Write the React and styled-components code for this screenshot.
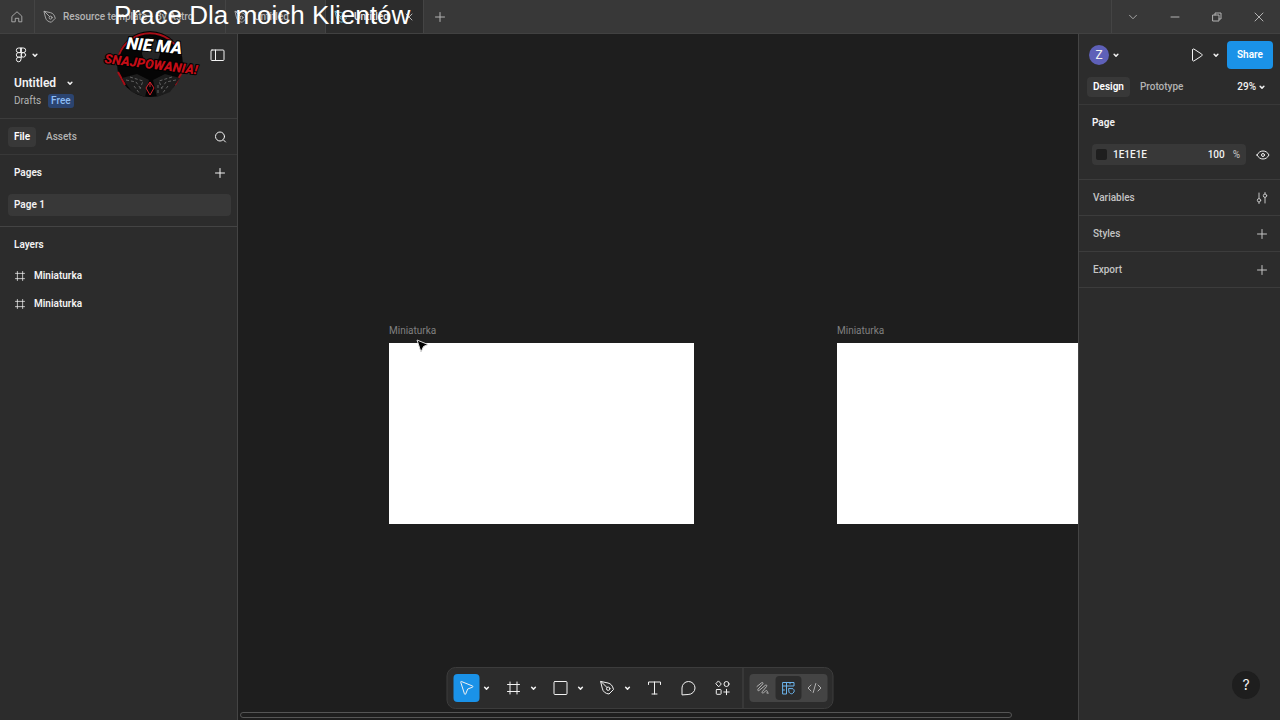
import React from "react";
import styled, { createGlobalStyle, css } from "styled-components";

const GlobalStyle = createGlobalStyle`
  * {
    box-sizing: border-box;
  }

  body {
    margin: 0;
    background: #1e1e1e;
    color: #f2f2f2;
    font-family: Roboto, "Liberation Sans", sans-serif;
    font-size: 10px;
    line-height: 16px;
    overflow: hidden;
  }

  button,
  input,
  select {
    font: inherit;
    color: inherit;
    background: none;
    border: 0;
    padding: 0;
    margin: 0;
  }

  h2,
  p,
  ul {
    margin: 0;
    padding: 0;
    font: inherit;
    list-style: none;
  }
`;

const paths = {
  home: <path d="M2.5 7 8 2l5.5 5v6.5H10v-4H6v4H2.5z" />,
  pen: (
    <>
      <path d="M1.5 1.5 8.5 3c3 .8 4.500 2.500 5.500 6.500L9.500 14C6 13.500 3.500 12 2.800 8.500z" />
      <path d="m1.500 1.500 6 6" />
      <circle cx="8.700" cy="8.700" r="1.700" />
    </>
  ),
  figma: (
    <>
      <path d="M8 1H5.600a2.300 2.300 0 0 0 0 4.600H8zM8 1h2.400a2.300 2.300 0 0 1 0 4.600H8zM8 5.600H5.600a2.300 2.300 0 0 0 0 4.600H8zM8 10.200H5.600A2.300 2.300 0 1 0 8 12.500z" />
      <circle cx="10.300" cy="7.900" r="2.300" />
    </>
  ),
  chevron: <path d="m5.500 7 2.500 2.500L10.500 7" />,
  wideChevron: <path d="m4 6 4 4 4-4" />,
  plus: <path d="M8 3.500v9M3.500 8h9" />,
  minus: <path d="M4 8h8" />,
  close: <path d="m4 4 8 8M12 4l-8 8" />,
  restore: (
    <>
      <rect x="4" y="6" width="6" height="6" />
      <path d="M6 6V4h6v6h-2" />
    </>
  ),
  panel: (
    <>
      <rect x="2" y="3" width="13" height="10.500" rx="1" />
      <path d="M6.500 3v10.500" />
    </>
  ),
  search: (
    <>
      <circle cx="8" cy="7.500" r="4.500" />
      <path d="m11.500 11 2 2" />
    </>
  ),
  frame: <path d="M4.500 2v12M11.500 2v12M2 4.500h12M2 11.500h12" />,
  square: <rect x="1.500" y="1.500" width="13" height="13" rx="1" />,
  cursor: (
    <path d="M2.200 2.200c-.2-.5.2-.9.700-.7L14 6c.6.300.6 1 0 1.200L9.200 9 7.200 14c-.3.600-1 .6-1.200 0z" />
  ),
  text: <path d="M2 4.500V2h12v2.500M8 2v12M5.500 14h5" />,
  comment: <path d="M1.500 14.500V8A6.500 6.500 0 1 1 8 14.500z" />,
  components: (
    <>
      <path d="m4.200 1.200 2.600 2.800-2.600 2.800L1.600 4z" />
      <circle cx="12" cy="4" r="2.500" />
      <rect x="1.800" y="9.500" width="4.800" height="4.800" rx="0.700" />
      <path d="M12 9.300v5.400M9.300 12h5.400" />
    </>
  ),
  draw: (
    <path d="M2.500 6.500 7 2.800c1.200-.8 2 .2 1.200 1.200L3.500 9.200c-.8 1.200.2 2 1.300 1.100l6-5c1.200-.8 2 .2 1.200 1.300l-4.200 5c-.8 1.200.2 2 1.300 1.100l2-1.700c1.200-.9 2.200 0 1.600 1.200l-.4.900h1.500" />
  ),
  design: (
    <>
      <path d="M2.500 2.500h11v3.500H6v8H2.500zM6 2.500V6H2.500M9.500 2.500V4M2.500 10H4" />
      <path d="m8.500 8.500 4 .2c1 .8 1.500 1.800 1 3.300l-1.700 1.700c-1.300.3-2.300-.2-3.100-1.200z" />
    </>
  ),
  code: <path d="m4.500 5-3 3 3 3M11.500 5l3 3-3 3M9.300 3.500l-2.600 9" />,
  play: (
    <path d="M3.500 3v10c0 .9.800 1.300 1.500.9l7.700-5c.6-.4.600-1.400 0-1.800L5 2.100C4.300 1.700 3.500 2.100 3.500 3z" />
  ),
  eye: (
    <>
      <path d="M2 8c1.500-2.700 3.500-4 6-4s4.500 1.300 6 4c-1.500 2.700-3.500 4-6 4s-4.500-1.300-6-4z" />
      <circle cx="8" cy="8" r="1.500" />
    </>
  ),
  variables: (
    <>
      <path d="M5 3v5.500M5 12v1.500M11 7.500V13M11 2.500V4" />
      <circle cx="5" cy="10.300" r="1.700" />
      <circle cx="11" cy="5.700" r="1.700" />
    </>
  ),
};

function Icon({ name, size = 16, weight = 1 }) {
  return (
    <Svg
      width={size}
      height={size}
      viewBox="0 0 16 16"
      strokeWidth={weight}
      aria-hidden="true"
    >
      {paths[name]}
    </Svg>
  );
}

const tools = [
  { name: "cursor", label: "Move", menu: true, active: true },
  { name: "frame", label: "Frame", menu: true },
  { name: "square", label: "Rectangle", menu: true },
  { name: "pen", label: "Pen", menu: true },
  { name: "text", label: "Text" },
  { name: "comment", label: "Comment" },
  { name: "components", label: "Actions" },
];

function TitleBar() {
  return (
    <Bar>
      <HomeButton aria-label="Home">
        <Icon name="home" size={14} />
      </HomeButton>
      <Tab $width={191}>
        <Icon name="pen" size={14} />
        Resource template - By Astro
      </Tab>
      <Tab $width={100}>
        <Icon name="pen" size={14} />
        Untitled
      </Tab>
      <Tab $width={98} $active>
        <TabIcon>
          <Icon name="pen" size={14} />
        </TabIcon>
        <TabName>Untitled</TabName>
        <Icon name="close" size={12} />
      </Tab>
      <NewTab aria-label="New tab">
        <Icon name="plus" />
      </NewTab>
      <WindowControls>
        <WindowButton aria-label="Tab list">
          <Icon name="wideChevron" size={14} />
        </WindowButton>
        <WindowButton aria-label="Minimize">
          <Icon name="minus" />
        </WindowButton>
        <WindowButton aria-label="Restore">
          <Icon name="restore" />
        </WindowButton>
        <WindowButton aria-label="Close">
          <Icon name="close" />
        </WindowButton>
      </WindowControls>
    </Bar>
  );
}

function LeftPanel() {
  return (
    <Sidebar>
      <FileHeader>
        <Row>
          <MenuButton aria-label="Main menu">
            <Icon name="figma" />
            <Icon name="chevron" size={12} weight={2} />
          </MenuButton>
          <IconButton aria-label="Toggle sidebar">
            <Icon name="panel" />
          </IconButton>
        </Row>
        <FileName>
          Untitled
          <Icon name="chevron" size={12} weight={2} />
        </FileName>
        <Location>
          Drafts
          <Plan>Free</Plan>
        </Location>
      </FileHeader>
      <TabRow>
        <PanelTab $active>File</PanelTab>
        <PanelTab>Assets</PanelTab>
        <Spacer />
        <IconButton aria-label="Search">
          <Icon name="search" />
        </IconButton>
      </TabRow>
      <Pages>
        <PagesHeader>
          <Heading>Pages</Heading>
          <IconButton aria-label="Add page">
            <Icon name="plus" />
          </IconButton>
        </PagesHeader>
        <PageItem>Page 1</PageItem>
      </Pages>
      <Layers>
        <Heading>Layers</Heading>
        <ul>
          <Layer>
            <Icon name="frame" size={12} weight={1} />
            Miniaturka
          </Layer>
          <Layer>
            <Icon name="frame" size={12} weight={1} />
            Miniaturka
          </Layer>
        </ul>
      </Layers>
    </Sidebar>
  );
}

function RightPanel() {
  return (
    <Inspector>
      <Account>
        <Avatar>Z</Avatar>
        <Icon name="chevron" size={12} weight={2} />
        <Spacer />
        <IconButton aria-label="Present">
          <Icon name="play" />
        </IconButton>
        <IconButton aria-label="Present options">
          <Icon name="chevron" size={12} weight={2} />
        </IconButton>
        <Share>Share</Share>
      </Account>
      <InspectorTabs>
        <PanelTab $active>Design</PanelTab>
        <PanelTab>Prototype</PanelTab>
        <Spacer />
        <Zoom>
          29%
          <Icon name="chevron" size={12} weight={2} />
        </Zoom>
      </InspectorTabs>
      <PageSection>
        <Heading>Page</Heading>
        <FillRow>
          <Fill>
            <Swatch />
            <HexInput aria-label="Page colour" defaultValue="1E1E1E" />
            <OpacityInput aria-label="Opacity" defaultValue="100" />
            <Unit>%</Unit>
          </Fill>
          <IconButton aria-label="Toggle visibility">
            <Icon name="eye" />
          </IconButton>
        </FillRow>
      </PageSection>
      <Section>
        Variables
        <IconButton aria-label="Open variables">
          <Icon name="variables" />
        </IconButton>
      </Section>
      <Section>
        Styles
        <IconButton aria-label="Add style">
          <Icon name="plus" />
        </IconButton>
      </Section>
      <Section>
        Export
        <IconButton aria-label="Add export">
          <Icon name="plus" />
        </IconButton>
      </Section>
    </Inspector>
  );
}

function Toolbar() {
  return (
    <Tools>
      <ToolList>
        {tools.map((tool) => (
          <ToolGroup key={tool.name}>
            <ToolButton aria-label={tool.label} $active={tool.active}>
              <Icon name={tool.name} />
            </ToolButton>
            {tool.menu && (
              <ToolMenu aria-label={`${tool.label} options`}>
                <Icon name="chevron" size={12} weight={2} />
              </ToolMenu>
            )}
          </ToolGroup>
        ))}
      </ToolList>
      <Modes>
        <ModeButton aria-label="Draw">
          <Icon name="draw" />
        </ModeButton>
        <ModeButton aria-label="Design" $active>
          <Icon name="design" />
        </ModeButton>
        <ModeButton aria-label="Dev mode">
          <Icon name="code" />
        </ModeButton>
      </Modes>
    </Tools>
  );
}

function Badge() {
  return (
    <BadgeSvg width="96" height="72" viewBox="0 0 96 72">
      <circle cx="48" cy="36" r="33" fill="#050505" />
      <path
        d="M17 27A33 33 0 0 1 79 27M16 44l7 13M80 44l-7 13"
        fill="none"
        stroke="#a80d16"
        strokeWidth="2"
      />
      <path d="M40 26c0-22 18-22 18 0l-4 12H44z" fill="#252525" />
      <path
        d="m20 50 15-4 12 6-4 17-13-5zM78 50l-15-4-12 6 4 17 13-5z"
        fill="#1c1c1c"
      />
      <path
        d="m24 52 10 2 5 7M28 49l13 4-3 8M32 58l6 8M74 52l-10 2-5 7M70 49l-13 4 3 8M66 58l-6 8M56 57v10"
        fill="none"
        stroke="#606060"
        strokeDasharray="3 2"
      />
      <path d="m48 54 4 6-4 7-4-7zM48 54v5" fill="none" stroke="#d5202b" />
      <Lettering x="24" y="21" $size={17} fill="#fff" transform="rotate(5 24 21)">
        NIE MA
      </Lettering>
      <Lettering x="2" y="35" $size={13} fill="#c40d17" transform="rotate(7 2 35)">
        SNAJPOWANIA!
      </Lettering>
    </BadgeSvg>
  );
}

function App() {
  return (
    <Window>
      <GlobalStyle />
      <TitleBar />
      <Workspace>
        <LeftPanel />
        <Canvas>
          <Artboard $x={151} $y={289}>
            <ArtboardName>Miniaturka</ArtboardName>
            <ArtboardBody />
          </Artboard>
          <Artboard $x={599} $y={289}>
            <ArtboardName>Miniaturka</ArtboardName>
            <ArtboardBody />
          </Artboard>
          <Pointer width="13" height="14" viewBox="0 0 13 14">
            <path d="M1 1 12 5.500 7.500 7.500 5 13z" />
          </Pointer>
          <Scrollbar />
        </Canvas>
        <RightPanel />
      </Workspace>
      <Toolbar />
      <Help aria-label="Help">?</Help>
      <Caption>Prace Dla moich Klientów</Caption>
      <Badge />
    </Window>
  );
}

export default App;

const Svg = styled.svg`
  flex: none;
  display: block;
  fill: none;
  stroke: currentColor;
  stroke-linecap: round;
  stroke-linejoin: round;
`;

const Window = styled.div`
  position: relative;
  display: flex;
  flex-direction: column;
  height: 100vh;
`;

const Bar = styled.header`
  display: flex;
  height: 34px;
  background: #383838;
  border-bottom: 1px solid #414141;
  color: #b3b3b3;
`;

const HomeButton = styled.button`
  display: grid;
  place-items: center;
  width: 35px;
  border-right: 1px solid #444;
`;

const Tab = styled.button`
  display: flex;
  align-items: center;
  gap: 6px;
  width: ${(props) => props.$width}px;
  padding: 0 8px;
  border-right: 1px solid #444;
  font-weight: 500;
  white-space: nowrap;

  ${(props) =>
    props.$active &&
    css`
      background: #2c2c2c;
      color: #e6e6e6;
    `}
`;

const TabIcon = styled.span`
  color: #6fc3d8;
`;

const TabName = styled.span`
  flex: 1;
  text-align: left;
`;

const NewTab = styled.button`
  display: grid;
  place-items: center;
  width: 32px;
`;

const WindowControls = styled.div`
  display: flex;
  margin-left: auto;
  border-left: 1px solid #444;
`;

const WindowButton = styled.button`
  display: grid;
  place-items: center;
  width: 42px;
`;

const Workspace = styled.div`
  flex: 1;
  display: grid;
  grid-template-columns: 238px minmax(0, 1fr) 202px;
`;

const Sidebar = styled.aside`
  background: #2c2c2c;
  border-right: 1px solid #444;
`;

const Row = styled.div`
  display: flex;
  align-items: center;
  justify-content: space-between;
`;

const Spacer = styled.div`
  flex: 1;
`;

const IconButton = styled.button`
  display: grid;
  place-items: center;
`;

const FileHeader = styled.div`
  height: 85px;
  padding: 13px 12px 0 13px;
  border-bottom: 1px solid #3c3c3c;
`;

const MenuButton = styled.button`
  display: flex;
  align-items: center;
`;

const FileName = styled.button`
  display: flex;
  align-items: center;
  gap: 8px;
  margin-top: 12px;
  padding-left: 1px;
  font-size: 12px;
  font-weight: 600;
`;

const Location = styled.p`
  display: flex;
  align-items: center;
  gap: 7px;
  margin-top: 2px;
  padding-left: 1px;
  color: #b3b3b3;
`;

const Plan = styled.span`
  padding: 0 3px;
  border-radius: 3px;
  background: #2b4470;
  color: #8cbcf5;
  line-height: 14px;
  font-weight: 500;
`;

const TabRow = styled.div`
  display: flex;
  align-items: center;
  gap: 4px;
  height: 36px;
  padding: 0 9px 0 8px;
  border-bottom: 1px solid #383838;
`;

const PanelTab = styled.button`
  height: 20px;
  padding: 0 6px;
  border-radius: 4px;
  color: #b3b3b3;
  font-weight: 500;

  ${(props) =>
    props.$active &&
    css`
      background: #383838;
      color: #fff;
      font-weight: 600;
    `}
`;

const Heading = styled.h2`
  font-weight: 600;
`;

const Pages = styled.section`
  height: 72px;
  padding: 10px 6px 0 8px;
  border-bottom: 1px solid #444;
`;

const PagesHeader = styled(Row)`
  padding: 0 3px 0 6px;
`;

const PageItem = styled.button`
  display: block;
  width: 100%;
  height: 22px;
  margin-top: 13px;
  padding: 0 6px;
  border-radius: 4px;
  background: #383838;
  font-weight: 600;
  text-align: left;
`;

const Layers = styled.section`
  padding: 10px 14px;

  ul {
    margin-top: 9px;
  }
`;

const Layer = styled.li`
  display: flex;
  align-items: center;
  gap: 8px;
  height: 28px;
  font-weight: 600;
`;

const Canvas = styled.main`
  position: relative;
  overflow: hidden;
  background: #1e1e1e;
`;

const Artboard = styled.div`
  position: absolute;
  left: ${(props) => props.$x}px;
  top: ${(props) => props.$y}px;
`;

const ArtboardName = styled.p`
  height: 20px;
  color: #808080;
`;

const ArtboardBody = styled.div`
  width: 305px;
  height: 181px;
  background: #fff;
`;

const Pointer = styled.svg`
  position: absolute;
  left: 178px;
  top: 305px;
  fill: #000;
  stroke: #ddd;
`;

const Scrollbar = styled.div`
  position: absolute;
  left: 2px;
  right: 66px;
  bottom: 2px;
  height: 6px;
  border: 1px solid #555;
  border-radius: 3px;
`;

const Inspector = styled.aside`
  background: #2c2c2c;
  border-left: 1px solid #444;
`;

const Account = styled.div`
  display: flex;
  align-items: center;
  padding: 7px 7px 0 10px;

  button {
    margin-left: 5px;
  }
`;

const Avatar = styled.span`
  display: grid;
  place-items: center;
  width: 20px;
  height: 20px;
  margin-right: 1px;
  border-radius: 50%;
  background: #5e60b8;
  font-size: 12px;
`;

const Share = styled.button`
  width: 46px;
  height: 28px;
  border-radius: 4px;
  background: #1a92e8;
  color: #fff;
  font-weight: 600;
`;

const InspectorTabs = styled.div`
  display: flex;
  align-items: center;
  gap: 4px;
  height: 36px;
  padding: 0 12px 0 8px;
  border-bottom: 1px solid #383838;
`;

const Zoom = styled.button`
  display: flex;
  align-items: center;
  font-weight: 500;
`;

const PageSection = styled.section`
  height: 75px;
  padding: 10px 9px 0 13px;
  border-bottom: 1px solid #3c3c3c;
`;

const FillRow = styled.div`
  display: flex;
  align-items: center;
  justify-content: space-between;
  margin-top: 13px;
`;

const Fill = styled.div`
  display: flex;
  align-items: center;
  width: 154px;
  height: 21px;
  padding: 0 6px 0 4px;
  border-radius: 4px;
  background: #383838;
  font-weight: 500;
`;

const Swatch = styled.span`
  width: 11px;
  height: 11px;
  border-radius: 2px;
  background: #1e1e1e;
`;

const HexInput = styled.input`
  flex: 1;
  min-width: 0;
  margin-left: 6px;
`;

const OpacityInput = styled.input`
  width: 25px;
`;

const Unit = styled.span`
  color: #b3b3b3;
`;

const Section = styled.section`
  display: flex;
  align-items: center;
  justify-content: space-between;
  height: 36px;
  padding: 0 10px 0 14px;
  border-bottom: 1px solid #3c3c3c;
  color: #c4c4c4;
  font-weight: 500;
`;

const Tools = styled.nav`
  position: absolute;
  left: 50%;
  bottom: 11px;
  display: flex;
  height: 42px;
  border: 1px solid #3c3c3c;
  border-radius: 9px;
  background: #2c2c2c;
  transform: translateX(-50%);
`;

const ToolList = styled.div`
  display: flex;
  align-items: center;
  gap: 8px;
  padding: 0 7px 0 6px;
  border-right: 1px solid #444;
`;

const ToolGroup = styled.div`
  display: flex;
`;

const ToolButton = styled.button`
  display: grid;
  place-items: center;
  width: 26px;
  height: 28px;
  border-radius: 4px;
  background: ${(props) => (props.$active ? "#1a92e8" : "none")};
`;

const ToolMenu = styled.button`
  display: grid;
  place-items: center;
  width: 13px;
`;

const Modes = styled.div`
  display: flex;
  align-self: center;
  height: 28px;
  margin: 0 5px 0 6px;
  border-radius: 4px;
  background: #444;
`;

const ModeButton = styled.button`
  display: grid;
  place-items: center;
  width: 26px;
  margin: 2px 0;
  border-radius: 4px;
  color: #b3b3b3;

  ${(props) =>
    props.$active &&
    css`
      background: #2c2c2c;
      color: #6cb4ec;
    `}
`;

const Help = styled.button`
  position: absolute;
  right: 20px;
  bottom: 21px;
  width: 28px;
  height: 28px;
  border-radius: 50%;
  background: #1e1e1e;
  font-family: Inter, sans-serif;
  font-size: 14px;
`;

const Caption = styled.p`
  position: absolute;
  left: 114px;
  top: 0;
  color: #fff;
  font-family: "Liberation Sans", Arial, sans-serif;
  font-size: 26px;
  line-height: 30px;
  white-space: nowrap;
`;

const BadgeSvg = styled.svg`
  position: absolute;
  left: 102px;
  top: 28px;
  overflow: visible;
`;

const Lettering = styled.text`
  font-family: Roboto, sans-serif;
  font-size: ${(props) => props.$size}px;
  font-style: italic;
  font-weight: 900;
  paint-order: stroke;
  stroke: #000;
  stroke-width: 2px;
`;
